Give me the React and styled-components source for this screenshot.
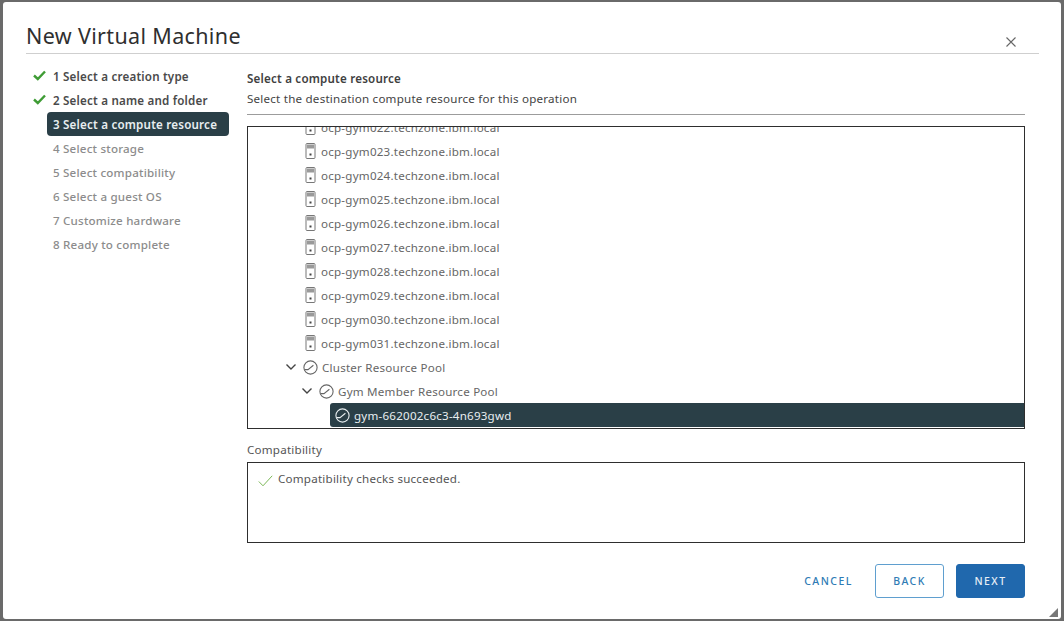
import React from "react";
import styled, { createGlobalStyle } from "styled-components";

const Global = createGlobalStyle`
  html, body { margin: 0; padding: 0; width: 1064px; height: 621px; overflow: hidden; background: #6a6a6a; }
  * { box-sizing: border-box; }
  body { font-family: "Noto Sans", "Open Sans", sans-serif; }
`;

const Backdrop = styled.div`
  width: 1064px;
  height: 621px;
  padding: 2px 3px 2px 3px;
`;
const Modal = styled.div`
  width: 100%;
  height: 100%;
  background: #fff;
  border-radius: 3px;
  padding: 0 22px 0 23px;
  display: flex;
  flex-direction: column;
  position: relative;
`;
const Header = styled.header`
  height: 52px;
  flex: none;
  border-bottom: 1px solid #cfcfcf;
  display: flex;
  align-items: flex-end;
  justify-content: space-between;
  padding-bottom: 3px;
`;
const Title = styled.h1`
  margin: 0;
  font-weight: 400;
  font-size: 21.5px;
  line-height: 28px;
  color: #2f2f2f;
  font-family: "Noto Sans", sans-serif;
  letter-spacing: 0.35px;
`;
const CloseButton = styled.button`
  border: 0;
  background: none;
  padding: 0;
  margin: 0 22px 2px 0;
  width: 12px;
  height: 12px;
  display: flex;
  color: #666;
`;
const Body = styled.div`
  display: flex;
  flex: 1;
  min-height: 0;
`;
const Steps = styled.ol`
  list-style: none;
  margin: 10px 0 0;
  padding: 0 0 0 21px;
  width: 221px;
  flex: none;
`;
const Step = styled.li`
  height: 24px;
  width: 182px;
  display: flex;
  align-items: center;
  padding-left: 6px;
  position: relative;
  border-radius: 4px;
  font-size: 11.6px;
  font-weight: ${p => (p.$state === "future" ? 500 : 600)};
  letter-spacing: 0.2px;
  white-space: nowrap;
  color: ${p => (p.$state === "active" ? "#e8eef0" : p.$state === "done" ? "#4a4a4a" : "#8c8c8c")};
  background: ${p => (p.$state === "active" ? "#2a3f47" : "transparent")};
`;
const StepCheck = styled.svg`
  position: absolute;
  left: -14px;
  top: 6px;
  width: 13px;
  height: 11px;
`;
const Main = styled.main`
  width: 778px;
  flex: none;
  display: flex;
  flex-direction: column;
`;
const PageTitle = styled.h2`
  margin: 16px 0 0;
  font-size: 11.6px;
  line-height: 18px;
  font-weight: 600;
  color: #3f3f3f;
  letter-spacing: 0.2px;
`;
const PageSubtitle = styled.p`
  margin: 2px 0 0;
  font-size: 11.6px;
  line-height: 18px;
  color: #444;
  letter-spacing: 0.22px;
  padding-bottom: 6px;
  border-bottom: 1px solid #9c9c9c;
  height: 25px;
`;
const Tree = styled.div`
  margin-top: 11px;
  height: 303px;
  border: 1px solid #2e2e2e;
  overflow: hidden;
  display: flex;
  flex-direction: column;
  justify-content: flex-end;
  padding-bottom: 1px;
`;
const Row = styled.div`
  height: 24px;
  flex: none;
  display: flex;
  align-items: center;
  gap: 4px;
  font-size: 11.6px;
  letter-spacing: 0.22px;
  white-space: nowrap;
  color: ${p => (p.$selected ? "#e8eef0" : "#666")};
  background: ${p => (p.$selected ? "#2a3f47" : "transparent")};
  margin-left: ${p => p.$indent}px;
  padding-left: ${p => (p.$selected ? 5 : 0)}px;
  border-radius: ${p => (p.$selected ? "3px 0 0 3px" : 0)};
`;
const Chevron = styled.svg`
  width: 12px;
  height: 12px;
  margin-right: 2px;
  flex: none;
`;
const ServerGlyph = styled.svg`
  width: 11px;
  height: 16px;
  flex: none;
  margin-right: 1px;
`;
const PoolGlyph = styled.svg`
  width: 15px;
  height: 15px;
  flex: none;
`;
const SectionLabel = styled.div`
  margin-top: 12px;
  font-size: 11.6px;
  line-height: 18px;
  color: #555;
  letter-spacing: 0.22px;
`;
const CompatBox = styled.div`
  margin-top: 3px;
  height: 81px;
  border: 1px solid #2e2e2e;
  padding: 7px 10px;
  display: flex;
  align-items: flex-start;
  gap: 5px;
  font-size: 11.6px;
  line-height: 18px;
  color: #555;
  letter-spacing: 0.22px;
`;
const CompatCheck = styled.svg`
  width: 15px;
  height: 12px;
  margin-top: 5px;
  flex: none;
`;
const Footer = styled.footer`
  display: flex;
  justify-content: flex-end;
  align-items: center;
  margin-top: 21px;
  gap: 12px;
`;
const Button = styled.button`
  height: 34px;
  width: ${p => p.$w}px;
  border-radius: 3px;
  font-family: "Noto Sans", sans-serif;
  font-size: 10.5px;
  font-weight: 500;
  letter-spacing: 1.45px;
  padding: 0;
  color: ${p => (p.$kind === "primary" ? "#e6eef5" : "#2f7bb5")};
  background: ${p => (p.$kind === "primary" ? "#2068ad" : "#fff")};
  border: 1px solid ${p => (p.$kind === "primary" ? "#2068ad" : p.$kind === "outline" ? "#5f9fcf" : "transparent")};
`;
const Resize = styled.svg`
  position: absolute;
  right: 3px;
  bottom: 2px;
  width: 9px;
  height: 9px;
`;

const steps = [
  ["1 Select a creation type", "done"],
  ["2 Select a name and folder", "done"],
  ["3 Select a compute resource", "active"],
  ["4 Select storage", "future"],
  ["5 Select compatibility", "future"],
  ["6 Select a guest OS", "future"],
  ["7 Customize hardware", "future"],
  ["8 Ready to complete", "future"],
];
const hosts = ["022","023","024","025","026","027","028","029","030","031"];

const Server = () => (
  <ServerGlyph viewBox="0 0 11 16">
    <rect x="1" y="0.5" width="9" height="15" rx="1" fill="#fff" stroke="#777" />
    <rect x="2" y="1.5" width="7" height="4" fill="#9a9a9a" />
    <rect x="4.5" y="10.5" width="2" height="2" fill="#444" />
  </ServerGlyph>
);
const Pool = ({ color }) => (
  <PoolGlyph viewBox="0 0 15 15" fill="none" stroke={color} strokeWidth="1.1">
    <circle cx="7.5" cy="7.5" r="6.6" />
    <path d="M1.5 9.6 H5 L10.4 5.2" />
  </PoolGlyph>
);
const Down = () => (
  <Chevron viewBox="0 0 12 12" fill="none" stroke="#444" strokeWidth="1.4">
    <path d="M1.5 3.5 L6 8 L10.5 3.5" />
  </Chevron>
);

export default function App() {
  return (
    <Backdrop>
      <Global />
      <Modal>
        <Header>
          <Title>New Virtual Machine</Title>
          <CloseButton aria-label="Close">
            <svg viewBox="0 0 12 12" width="12" height="12" stroke="#666" strokeWidth="1.1" fill="none">
              <path d="M1.5 1.5 L10.5 10.5 M10.5 1.5 L1.5 10.5" />
            </svg>
          </CloseButton>
        </Header>
        <Body>
          <Steps>
            {steps.map(([label, state]) => (
              <Step key={label} $state={state}>
                {state === "done" && (
                  <StepCheck viewBox="0 0 13 11" fill="none" stroke="#3f9c35" strokeWidth="2.4">
                    <path d="M1 5.5 L4.8 9 L12 1.5" />
                  </StepCheck>
                )}
                {label}
              </Step>
            ))}
          </Steps>
          <Main>
            <PageTitle>Select a compute resource</PageTitle>
            <PageSubtitle>Select the destination compute resource for this operation</PageSubtitle>
            <Tree>
              {hosts.map(n => (
                <Row key={n} $indent={57}>
                  <Server />
                  ocp-gym{n}.techzone.ibm.local
                </Row>
              ))}
              <Row $indent={37}><Down /><Pool color="#666" />Cluster Resource Pool</Row>
              <Row $indent={53}><Down /><Pool color="#666" />Gym Member Resource Pool</Row>
              <Row $indent={82} $selected><Pool color="#e8eef0" />gym-662002c6c3-4n693gwd</Row>
            </Tree>
            <SectionLabel>Compatibility</SectionLabel>
            <CompatBox>
              <CompatCheck viewBox="0 0 15 12" fill="none" stroke="#7cb858" strokeWidth="1">
                <path d="M0.8 6.5 L5 10.8 L14.2 0.8" />
              </CompatCheck>
              Compatibility checks succeeded.
            </CompatBox>
            <Footer>
              <Button $kind="flat" $w={69}>CANCEL</Button>
              <Button $kind="outline" $w={69}>BACK</Button>
              <Button $kind="primary" $w={69}>NEXT</Button>
            </Footer>
          </Main>
        </Body>
        <Resize viewBox="0 0 9 9"><path d="M9 0 V9 H0 Z" fill="#777" /></Resize>
      </Modal>
    </Backdrop>
  );
}
